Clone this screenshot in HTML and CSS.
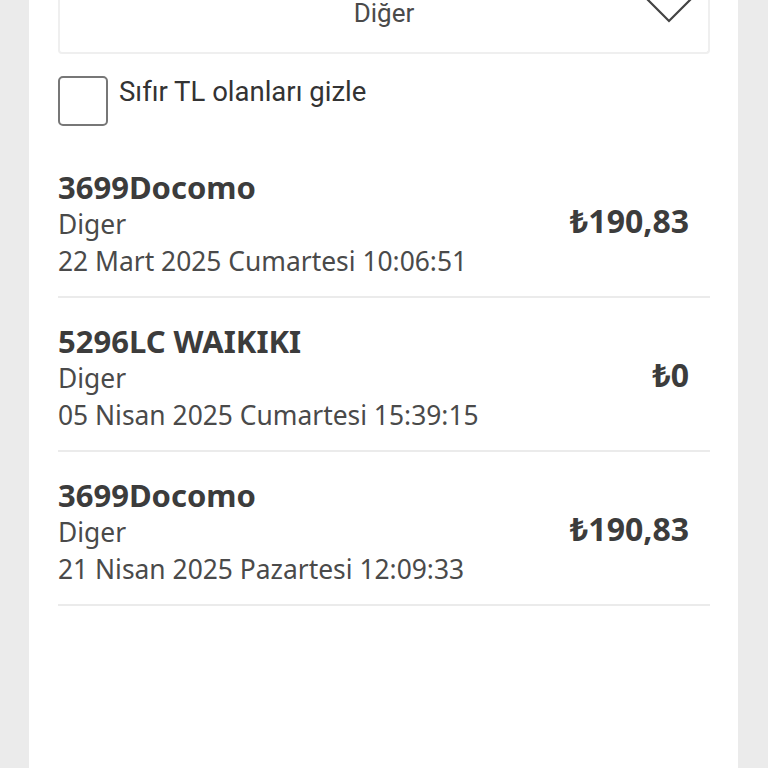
FILE: index.html
```html
<!DOCTYPE html>
<html>
<head>
  <title>Harcamalar</title>
  <link rel="stylesheet" href="styles.css">
</head>
<body>
  <div class="panel">
    <div class="select-box">
      <span></span>
      <span class="select-value">Diğer</span>
      <svg class="chevron" viewBox="0 0 50 28" xmlns="http://www.w3.org/2000/svg">
        <path d="M1 2 L25 26 L49 2" fill="none" stroke="#444" stroke-width="2.2"/>
      </svg>
    </div>

    <label class="check-row">
      <span class="check-box"></span>
      <span class="check-label">Sıfır TL olanları gizle</span>
    </label>

    <ul class="tx-list">
      <li class="tx">
        <div class="tx-info">
          <div class="tx-title">3699Docomo</div>
          <div class="tx-line">Diger</div>
          <div class="tx-line">22 Mart 2025 Cumartesi 10:06:51</div>
        </div>
        <div class="tx-amount">₺190,83</div>
      </li>
      <li class="tx">
        <div class="tx-info">
          <div class="tx-title">5296LC WAIKIKI</div>
          <div class="tx-line">Diger</div>
          <div class="tx-line">05 Nisan 2025 Cumartesi 15:39:15</div>
        </div>
        <div class="tx-amount">₺0</div>
      </li>
      <li class="tx">
        <div class="tx-info">
          <div class="tx-title">3699Docomo</div>
          <div class="tx-line">Diger</div>
          <div class="tx-line">21 Nisan 2025 Pazartesi 12:09:33</div>
        </div>
        <div class="tx-amount">₺190,83</div>
      </li>
    </ul>
  </div>
</body>
</html>
```

FILE: styles.css
```css
body {
  margin: 0;
  background-color: #ebebeb;
  font-family: "Noto Sans", "DejaVu Sans", sans-serif;
  color: #444;
  overflow: hidden;
}
.panel {
  margin: 0 30px 0 29px;
  padding: 0 28px 0 29px;
  background-color: white;
  min-height: 768px;
}
.select-box {
  display: grid;
  grid-template-columns: 1fr auto 1fr;
  align-items: start;
  height: 52px;
  border: 2px solid #efefef;
  border-top: none;
  border-radius: 0 0 4px 4px;
}
.select-value {
  font-family: Roboto, sans-serif;
  font-size: 26px;
  line-height: 26px;
  color: #4a4a4a;
}
.chevron {
  justify-self: end;
  width: 50px;
  height: 28px;
  margin: -5px 14px 0 0;
}
.check-row {
  display: flex;
  align-items: flex-start;
  gap: 11px;
  margin-top: 22px;
}
.check-box {
  width: 46px;
  height: 46px;
  border: 2px solid #777;
  border-radius: 5px;
}
.check-label {
  font-family: Roboto, sans-serif;
  font-size: 27.5px;
  line-height: 32px;
  color: #333;
}
.tx-list {
  list-style: none;
  margin: 38px 0 0;
  padding: 0;
}
.tx {
  display: flex;
  align-items: center;
  justify-content: space-between;
  padding: 4px 21px 16px 0;
  border-bottom: 2px solid #ebebeb;
  margin-bottom: 20px;
}
.tx-title {
  font-size: 31px;
  font-weight: bold;
  line-height: 38px;
  color: #3c3c3c;
}
.tx-line {
  font-size: 26.4px;
  line-height: 37px;
  color: #4a4a4a;
}
.tx-amount {
  font-size: 32px;
  font-weight: bold;
  color: #3c3c3c;
  margin-bottom: 8px;
}
```
